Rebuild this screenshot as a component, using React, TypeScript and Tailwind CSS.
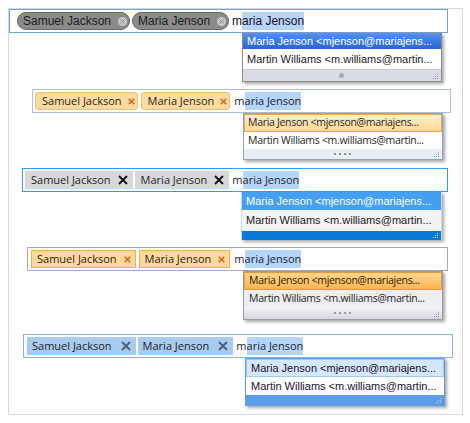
import React from 'react';

type Skin = {
    box: string;
    input: string;
    font: string;
    token: string;
    close: React.ReactNode;
    typed: string;
    list: string;
    listFont: string;
    active: string;
    item: string;
    footer: React.ReactNode;
};

const people = ['Samuel Jackson', 'Maria Jenson'];
const matches = ['Maria Jenson <mjenson@mariajens...', 'Martin Williams <m.williams@martin...'];

const Grip = ({ color }: { color: string }) => (
    <svg width="6" height="6" viewBox="0 0 6 6">
        <rect x="4" y="0" width="1" height="1" fill={color} />
        <rect x="2" y="2" width="1" height="1" fill={color} />
        <rect x="4" y="2" width="1" height="1" fill={color} />
        <rect x="0" y="4" width="1" height="1" fill={color} />
        <rect x="2" y="4" width="1" height="1" fill={color} />
        <rect x="4" y="4" width="1" height="1" fill={color} />
    </svg>
);

const FourDots = ({ color }: { color: string }) => (
    <div className="flex gap-[3px]">
        {[0, 1, 2, 3].map((i) => (
            <span key={i} className="w-[2px] h-[2px]" style={{ background: color }} />
        ))}
    </div>
);

const Cross = ({ size, color, width }: { size: number; color: string; width: number }) => (
    <svg width={size} height={size} viewBox="0 0 10 10" className="shrink-0">
        <path d="M1 1L9 9M9 1L1 9" stroke={color} strokeWidth={width} fill="none" />
    </svg>
);

const skins: Skin[] = [
    {
        box: 'ml-0 mt-0 w-[439px]',
        input: 'border-[#6ea3d8] pl-[7px] gap-[2px]',
        font: "font-['Liberation_Sans',Arial,sans-serif] text-[12px]",
        token: 'rounded-full bg-[#8b8b8b] border border-[#6a6a6a] pl-[5px] pr-[2px] gap-[7px] text-[#1c1c1c]',
        close: (
            <span className="w-[9px] h-[9px] rounded-full bg-[#c8c8c8] flex items-center justify-center shrink-0">
                <Cross size={5} color="#8a8a8a" width={2} />
            </span>
        ),
        typed: 'text-[#2a0a1a]',
        list: 'ml-[233px] w-[200px] border border-[#8d8d8d]',
        listFont: "font-['Liberation_Sans',Arial,sans-serif] text-[11px]",
        active: 'h-[15px] pl-[4px] bg-linear-to-b from-[#4d8ff0] to-[#2a63d8] text-white',
        item: 'h-[20px] pl-[4px] bg-white text-[#1a1a1a]',
        footer: (
            <div className="h-[12px] bg-[#dadbe7] border-t border-[#c9cad8] flex items-center">
                <div className="flex-1" />
                <span className="w-[5px] h-[5px] rounded-full bg-[#a9a9b6]" />
                <div className="flex-1 flex justify-end items-end self-stretch pr-[2px] pb-[1px]">
                    <Grip color="#a0a0ac" />
                </div>
            </div>
        ),
    },
    {
        box: 'ml-[23px] mt-[7px] w-[419px]',
        input: 'border-[#a9c0df] pl-[2px] gap-[3px]',
        font: "font-['Open_Sans',sans-serif] text-[11px]",
        token: 'rounded-[3px] bg-[#ffdba0] border border-[#f2bf73] pl-[6px] pr-[2px] gap-[6px] text-[#1e1e1e]',
        close: <Cross size={7} color="#d8641c" width={2.2} />,
        typed: 'text-[#1e1e1e]',
        list: 'ml-[211px] w-[200px] border border-[#8ea6c6]',
        listFont: "font-['Open_Sans',sans-serif] text-[10.5px] tracking-[-0.3px]",
        active: 'h-[18px] pl-[3px] bg-linear-to-b from-[#fff0cc] to-[#ffd88f] border border-[#f0a448] text-[#1e1e1e]',
        item: 'h-[17px] pl-[4px] bg-white text-[#1e1e1e]',
        footer: (
            <div className="h-[10px] bg-[#e9edf4] flex items-center">
                <div className="flex-1" />
                <FourDots color="#8b90a2" />
                <div className="flex-1 flex justify-end items-end self-stretch pr-[2px] pb-[1px]">
                    <Grip color="#8b90a2" />
                </div>
            </div>
        ),
    },
    {
        box: 'ml-[13px] mt-[8px] w-[426px]',
        input: 'border-[#3399ee] pl-[2px] gap-[2px]',
        font: "font-['Open_Sans',sans-serif] text-[11px]",
        token: 'bg-[#d8d8dc] pl-[6px] pr-[5px] gap-[7px] text-[#1e1e1e]',
        close: <Cross size={10} color="#111111" width={1.8} />,
        typed: 'text-[#1e1e1e]',
        list: 'ml-[219px] w-[201px] border-x border-[#c8d8e8]',
        listFont: "font-['Liberation_Sans',Arial,sans-serif] text-[11px]",
        active: 'h-[18px] pl-[4px] bg-[#45a0f2] text-white',
        item: 'h-[21px] pl-[4px] bg-[#f3f3f3] text-[#1a1a1a]',
        footer: (
            <div className="h-[9px] bg-[#0a79d6] flex justify-end items-end pr-[2px] pb-[1px]">
                <Grip color="#cfe6fb" />
            </div>
        ),
    },
    {
        box: 'ml-[18px] mt-[7px] w-[421px]',
        input: 'border-[#a6a6bd] pl-[3px] gap-[3px]',
        font: "font-['Open_Sans',sans-serif] text-[11px]",
        token: 'bg-[#ffd99a] border border-[#f5b14d] pl-[5px] pr-[4px] gap-[7px] text-[#1e1e1e]',
        close: <Cross size={7} color="#d8641c" width={2.2} />,
        typed: 'text-[#1e1e1e]',
        list: 'ml-[216px] w-[200px] border border-[#9a9aaa]',
        listFont: "font-['Open_Sans',sans-serif] text-[10.5px] tracking-[-0.3px]",
        active: 'h-[18px] pl-[4px] bg-linear-to-b from-[#ffd68e] to-[#ffb550] border border-[#e59b3a] text-[#2a1a00]',
        item: 'h-[17px] pl-[5px] bg-[#ededf3] text-[#1e1e1e]',
        footer: (
            <div className="h-[12px] bg-linear-to-b from-[#f4f4f6] to-[#d6d6de] flex items-center">
                <div className="flex-1" />
                <FourDots color="#9a9aa6" />
                <div className="flex-1 flex justify-end items-end self-stretch pr-[2px] pb-[1px]">
                    <Grip color="#9a9aa6" />
                </div>
            </div>
        ),
    },
    {
        box: 'ml-[14px] mt-[14px] w-[430px]',
        input: 'border-[#83b5e9] pl-[3px] gap-[2px]',
        font: "font-['Open_Sans',sans-serif] text-[11px]",
        token: 'bg-[#a8ccf0] pl-[5px] pr-[5px] gap-[9px] text-[#1e1e1e]',
        close: <Cross size={10} color="#49627c" width={2} />,
        typed: 'text-[#1e1e1e]',
        list: 'ml-[222px] w-[200px] border border-[#5d9ce6]',
        listFont: "font-['Liberation_Sans',Arial,sans-serif] text-[11px]",
        active: 'h-[18px] pl-[4px] bg-[#d5e7fa] border border-[#a5c8ef] text-[#1a1030]',
        item: 'h-[18px] pl-[5px] bg-white text-[#1a1030]',
        footer: (
            <div className="h-[10px] bg-[#5b9de6] flex justify-end items-end pr-[2px] pb-[1px]">
                <Grip color="#b5d4f5" />
            </div>
        ),
    },
];

function TokenBox({ skin }: { skin: Skin }) {
    return (
        <div className={skin.box}>
            {/* input with tokens */}
            <div className={`h-[24px] border bg-white flex items-center ${skin.input} ${skin.font}`}>
                {people.map((name) => (
                    <span key={name} className={`flex items-center h-[18px] shrink-0 whitespace-nowrap ${skin.token}`}>
                        <span>{name}</span>
                        {skin.close}
                    </span>
                ))}
                <span className={`ml-[1px] whitespace-nowrap leading-[18px] ${skin.typed}`}>
                    m<span className="inline-block bg-[#b4d5fe]">aria Jenson</span>
                </span>
            </div>

            {/* suggestion popup */}
            <div className={`shadow-[2px_2px_3px_rgba(0,0,0,0.35)] bg-white ${skin.list} ${skin.listFont}`}>
                <div className={`flex items-center whitespace-nowrap overflow-hidden ${skin.active}`}>{matches[0]}</div>
                <div className={`flex items-center whitespace-nowrap overflow-hidden ${skin.item}`}>{matches[1]}</div>
                {skin.footer}
            </div>
        </div>
    );
}

export default function App() {
    return (
        <div className="w-[470px] h-[423px] bg-white pt-[8px] pl-[8px]">
            <div className="w-[455px] h-[407px] border border-[#d6d6d6]">
                {skins.map((skin, i) => (
                    <TokenBox key={i} skin={skin} />
                ))}
            </div>
        </div>
    );
}
